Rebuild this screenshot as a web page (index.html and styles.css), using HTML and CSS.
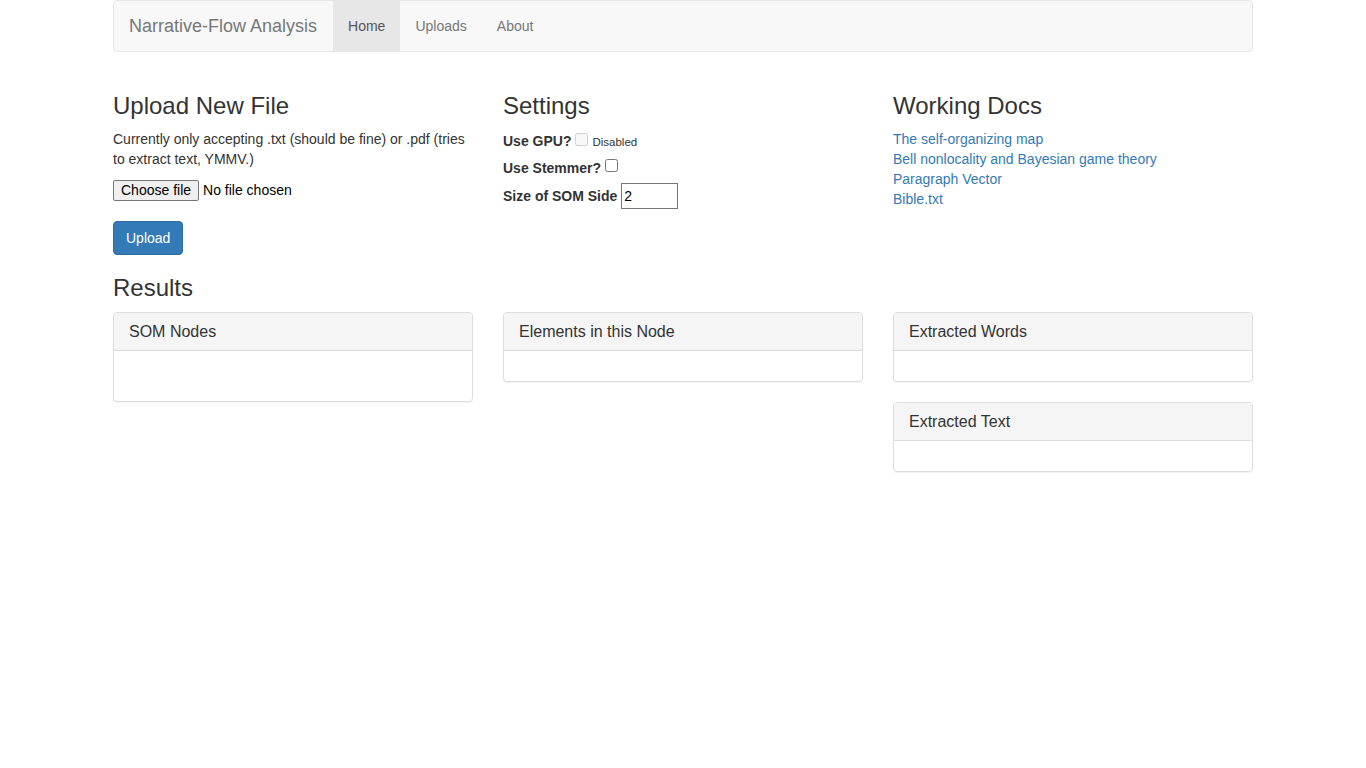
FILE: index.html
```html
<!DOCTYPE html>
<html>
<head>
<meta charset="utf-8">
<title>Narrative-Flow Analysis</title>
<link rel="stylesheet" href="styles.css">
</head>
<body>
<div class="container">
  <nav class="navbar">
    <a class="brand" href="#">Narrative-Flow Analysis</a>
    <ul class="nav">
      <li class="active"><a href="#">Home</a></li>
      <li><a href="#">Uploads</a></li>
      <li><a href="#">About</a></li>
    </ul>
  </nav>

  <div class="row">
    <div class="col">
      <h3>Upload New File</h3>
      <p>Currently only accepting .txt (should be fine) or .pdf (tries to extract text, YMMV.)</p>
      <div class="file-row">
        <button class="file-btn" type="button">Choose file</button><span class="file-name">No file chosen</span>
      </div>
      <button class="btn-primary" type="button">Upload</button>
    </div>
    <div class="col">
      <h3>Settings</h3>
      <div class="set-row r1"><label>Use GPU?</label><input type="checkbox" disabled><small>Disabled</small></div>
      <div class="set-row r2"><label>Use Stemmer?</label><input type="checkbox"></div>
      <div class="set-row r3"><label>Size of SOM Side</label><input class="num" type="text" value="2"></div>
    </div>
    <div class="col">
      <h3>Working Docs</h3>
      <div class="links">
        <a href="#">The self-organizing map</a>
        <a href="#">Bell nonlocality and Bayesian game theory</a>
        <a href="#">Paragraph Vector</a>
        <a href="#">Bible.txt</a>
      </div>
    </div>
  </div>

  <h3 class="results">Results</h3>
  <div class="row">
    <div class="col">
      <div class="panel">
        <div class="panel-heading">SOM Nodes</div>
        <div class="panel-body tall"></div>
      </div>
    </div>
    <div class="col">
      <div class="panel">
        <div class="panel-heading">Elements in this Node</div>
        <div class="panel-body"></div>
      </div>
    </div>
    <div class="col">
      <div class="panel">
        <div class="panel-heading">Extracted Words</div>
        <div class="panel-body"></div>
      </div>
      <div class="panel">
        <div class="panel-heading">Extracted Text</div>
        <div class="panel-body"></div>
      </div>
    </div>
  </div>
</div>
</body>
</html>
```

FILE: styles.css
```css
* { box-sizing: border-box; }
html, body { margin: 0; padding: 0; }
body {
  font-family: "Liberation Sans", Arial, Helvetica, sans-serif;
  font-size: 14px;
  line-height: 20px;
  color: #333;
  background: #fff;
}
a { color: #337ab7; text-decoration: none; }
.container {
  width: 1170px;
  margin: 0 auto;
  padding: 0 15px;
}
.navbar {
  display: flex;
  height: 52px;
  background: #f8f8f8;
  border: 1px solid #e7e7e7;
  border-radius: 4px;
  margin-bottom: 21px;
}
.brand {
  font-size: 18px;
  line-height: 20px;
  padding: 15px 16px 15px 15px;
  color: #777;
}
.nav {
  display: flex;
  list-style: none;
  margin: 0;
  padding: 0;
}
.nav a {
  display: block;
  padding: 15px;
  line-height: 20px;
  color: #777;
}
.nav .active a {
  background: #e7e7e7;
  color: #555;
}
.row {
  display: flex;
  gap: 30px;
}
.col {
  width: 360px;
}
h3 {
  font-size: 24px;
  font-weight: 500;
  line-height: 1.1;
  margin: 20px 0 10px;
}
p { margin: 0 0 10px; }
.file-row {
  display: flex;
  align-items: center;
  height: 22px;
  margin-top: 1px;
}
.file-btn {
  font-family: "Liberation Sans", Arial, sans-serif;
  font-size: 14px;
  color: #000;
  background: #efefef;
  border: 1px solid #767676;
  border-radius: 2px;
  padding: 0 7px;
  height: 21px;
  line-height: 19px;
  margin: 0 4px 0 0;
}
.file-name { color: #000; }
.btn-primary {
  display: block;
  margin-top: 20px;
  font-family: "Liberation Sans", Arial, sans-serif;
  font-size: 14px;
  line-height: 20px;
  padding: 6px 12px;
  height: 34px;
  width: 70px;
  color: #fff;
  background: #337ab7;
  border: 1px solid #2e6da4;
  border-radius: 4px;
}
.set-row {
  display: flex;
  align-items: center;
}
.set-row label { font-weight: bold; margin-right: 4px; }
.set-row input[type=checkbox] { margin: 0 3px 0 0; width: 13px; height: 13px; }
.r1 { height: 23px; margin-bottom: 5px; padding-top: 1px; }
.r1 input { position: relative; top: -2px; }
.r2 { height: 22px; margin-bottom: 4px; }
.r2 input { position: relative; top: -3px; }
.r1 small { font-size: 11.5px; margin-left: 1px; position: relative; top: 1px; }
.r3 { height: 26px; }
.num {
  width: 57px;
  height: 26px;
  font-family: "Liberation Sans", Arial, sans-serif;
  font-size: 14px;
  padding: 1px 2px;
  border: 1px solid #767676;
  margin: 0;
}
.links a { display: block; }
.results { margin-top: 20px; }
.panel {
  border: 1px solid #ddd;
  border-radius: 4px;
  margin-bottom: 20px;
  box-shadow: 0 1px 1px rgba(0,0,0,.05);
}
.panel-heading {
  background: #f5f5f5;
  border-bottom: 1px solid #ddd;
  border-radius: 3px 3px 0 0;
  padding: 10px 15px;
  font-size: 16px;
  line-height: 17px;
  color: #333;
}
.panel-body { height: 30px; }
.panel-body.tall { height: 50px; }
```
